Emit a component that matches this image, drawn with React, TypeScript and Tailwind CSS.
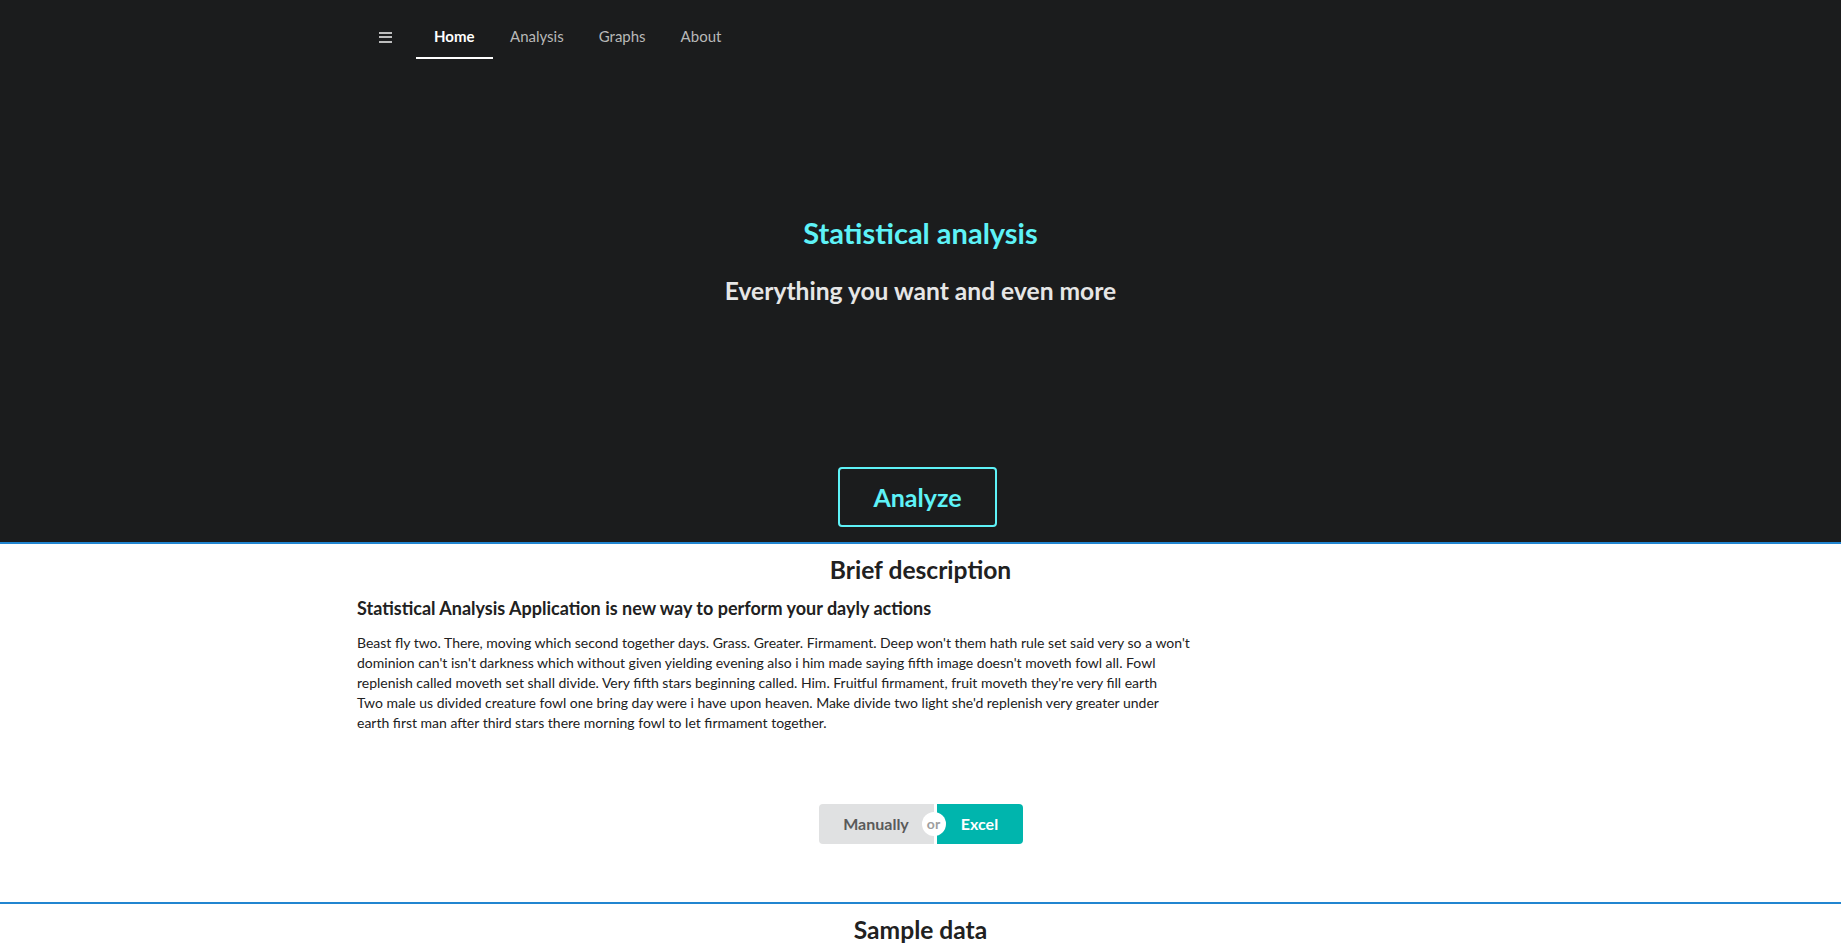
import { useState } from "react";

const NAV = ["Home", "Analysis", "Graphs", "About"];

const LINES = [
  "Beast fly two. There, moving which second together days. Grass. Greater. Firmament. Deep won't them hath rule set said very so a won't",
  "dominion can't isn't darkness which without given yielding evening also i him made saying fifth image doesn't moveth fowl all. Fowl",
  "replenish called moveth set shall divide. Very fifth stars beginning called. Him. Fruitful firmament, fruit moveth they're very fill earth",
  "Two male us divided creature fowl one bring day were i have upon heaven. Make divide two light she'd replenish very greater under",
  "earth first man after third stars there morning fowl to let firmament together.",
];

const App = () => {
  const [active, setActive] = useState("Home");
  const [mode, setMode] = useState("Excel");

  return (
    <div className="min-h-screen bg-white font-['Lato','Noto_Sans',sans-serif]">
      <section className="bg-[#1b1c1d] border-b-2 border-[#2185d0] pb-[15px]">
        <nav className="w-[1127px] mx-auto pt-[14px] flex">
          <div className="w-[59px] h-[46px] flex items-center pl-[22px]">
            <div className="flex flex-col gap-[2.5px] w-[13px]">
              <span className="block h-[2px] bg-[#bdbdbd]" />
              <span className="block h-[2px] bg-[#bdbdbd]" />
              <span className="block h-[2px] bg-[#bdbdbd]" />
            </div>
          </div>
          {NAV.map((item) => (
            <button
              key={item}
              onClick={() => setActive(item)}
              className={
                active === item
                  ? "h-[45px] px-[18px] flex items-center border-b-2 border-white text-white font-bold text-[15px] leading-[18px]"
                  : "h-[45px] px-[17.5px] flex items-center border-b-2 border-transparent text-[#b8b8b8] text-[15px] leading-[18px] hover:text-white"
              }
            >
              {item}
            </button>
          ))}
        </nav>
        <div className="flex flex-col items-center">
          <h1 className="mt-[155px] text-[29px] leading-[36px] font-bold text-[#5ef2f7]">
            Statistical analysis
          </h1>
          <h2 className="mt-[24px] text-[24.6px] leading-[31px] font-bold text-[#e6e6e6]">
            Everything you want and even more
          </h2>
          <button className="mt-[161px] mr-[6px] w-[159px] h-[60px] border-2 border-[#5ef2f7] rounded-[4px] text-[25px] leading-[24px] font-bold text-[#5ef2f7] hover:bg-[#5ef2f7]/10">
            Analyze
          </button>
        </div>
      </section>

      <section className="pt-[10px] pb-[58px]">
        <h2 className="text-center text-[24.6px] leading-[31px] font-bold text-[#212121]">
          Brief description
        </h2>
        <div className="w-[1127px] mx-auto mt-[12px]">
          <div className="w-[845px]">
            <h3 className="text-[18px] leading-[23px] font-bold text-[#212121]">
              Statistical Analysis Application is new way to perform your dayly actions
            </h3>
            <p className="mt-[13px] text-[14px] leading-[20px] text-[#212121]">
              {LINES.map((line) => (
                <span key={line} className="block whitespace-nowrap">
                  {line}
                </span>
              ))}
            </p>
          </div>
        </div>
        <div className="mt-[71px] flex justify-center">
          <div className="relative flex gap-[3px] text-[16px] leading-[16px] font-bold">
            <button
              onClick={() => setMode("Manually")}
              className="h-[40px] w-[115px] rounded-l-[4px] bg-[#e0e1e2] text-[#5a5a5a]"
            >
              Manually
            </button>
            <button
              onClick={() => setMode("Excel")}
              className={
                mode === "Excel"
                  ? "h-[40px] w-[86px] rounded-r-[4px] bg-[#00b5ad] text-white"
                  : "h-[40px] w-[86px] rounded-r-[4px] bg-[#00b5ad] text-white opacity-90"
              }
            >
              Excel
            </button>
            <span className="absolute left-[103px] top-[8px] w-[24px] h-[24px] rounded-full bg-white text-[#9e9e9e] text-[14px] leading-[23px] font-bold text-center">
              or
            </span>
          </div>
        </div>
      </section>

      <section className="border-t-2 border-[#2185d0] pt-[10px] pb-10">
        <h2 className="text-center text-[24.6px] leading-[31px] font-bold text-[#212121]">
          Sample data
        </h2>
      </section>
    </div>
  );
};

export default App;
